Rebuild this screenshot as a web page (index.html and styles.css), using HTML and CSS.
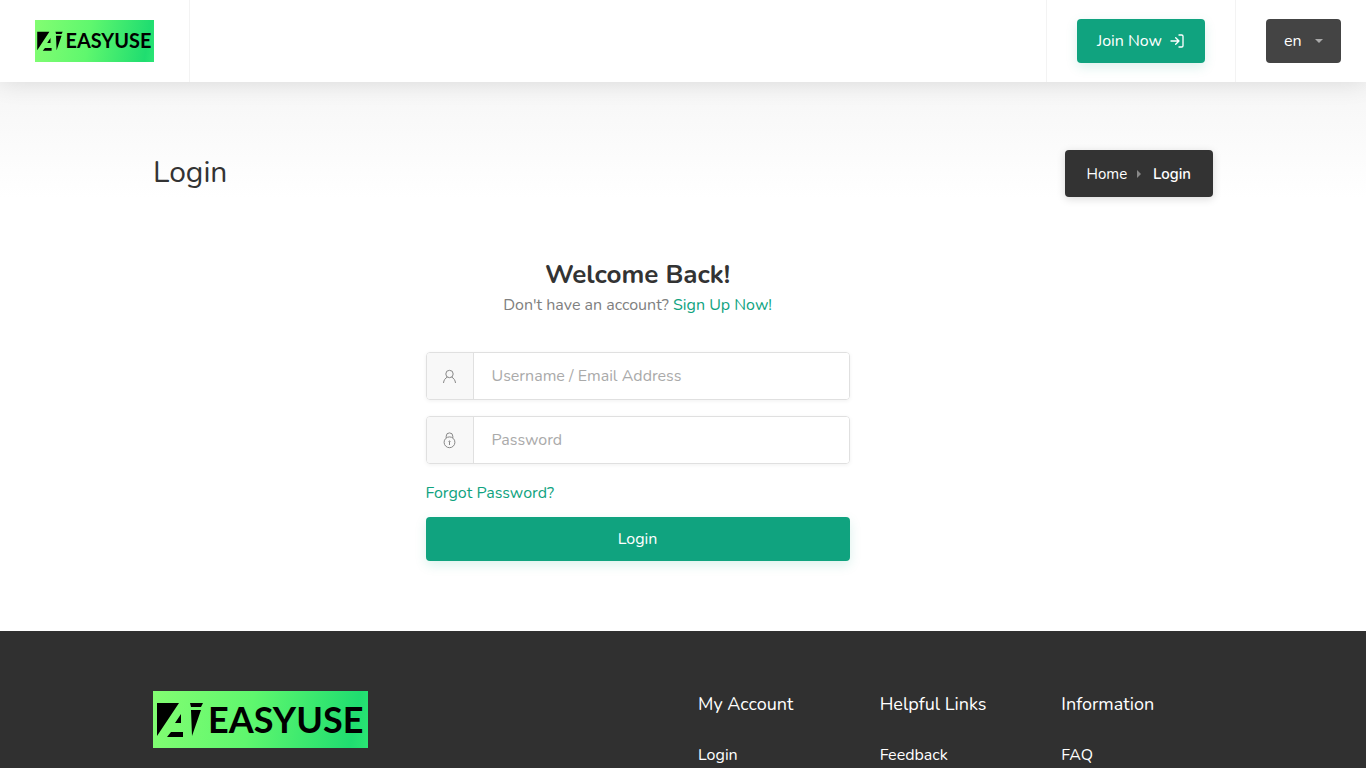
FILE: index.html
```
<!DOCTYPE html>
<html lang="en">
<head>
    <meta charset="utf-8">
    <meta name="viewport" content="width=device-width, initial-scale=1">
    <title>Login</title>
    <link rel="stylesheet" href="styles.css">
</head>
<body>
    <svg class="sprite" aria-hidden="true">
        <symbol id="logo" viewBox="0 0 215 57">
            <path d="M4 12H26L4 45ZM28 23V32H22ZM18 41H30V46H14ZM37 12H50L48 16H38ZM38 19H48L39 45Z"/>
            <text class="logo-text" x="55" y="42">EASYUSE</text>
        </symbol>
    </svg>

    <header class="header">
        <a class="header-logo" href="#"><svg class="logo logo-small" role="img" aria-label="Easyuse" viewBox="0 0 215 57"><use href="#logo"/></svg></a>
        <div class="header-item header-join">
            <a class="button join" href="#">Join Now
                <svg class="icon" viewBox="0 0 24 24"><path d="M15 3h4a2 2 0 0 1 2 2v14a2 2 0 0 1-2 2h-4M10 17l5-5-5-5M15 12H3"/></svg>
            </a>
        </div>
        <div class="header-item header-lang">
            <div class="lang">
                <select aria-label="Language"><option>en</option></select>
            </div>
        </div>
    </header>

    <div class="titlebar">
        <div class="container titlebar-inner">
            <h1>Login</h1>
            <nav class="breadcrumbs">
                <a href="#">Home</a>
                <span class="arrow"></span>
                <b>Login</b>
            </nav>
        </div>
    </div>

    <main class="container grid">
        <form class="login">
            <h2>Welcome Back!</h2>
            <p class="signup">Don't have an account? <a href="#">Sign Up Now!</a></p>
            <div class="field">
                <label for="username"><svg class="field-icon" viewBox="0 0 16 16"><circle cx="7.500" cy="6" r="3.700"/><path d="M5.400 9C3.200 10.300 1.800 12 1.500 15M9.600 9c2.200 1.300 3.600 3 3.900 6"/></svg></label>
                <input id="username" type="text" placeholder="Username / Email Address">
            </div>
            <div class="field">
                <label for="password"><svg class="field-icon" viewBox="0 0 16 16"><circle cx="7.500" cy="10.300" r="5.400"/><path d="M4.200 6V4.200a3.300 3.300 0 0 1 6.600 0V6M7.500 10v3"/><circle cx="7.500" cy="9.500" r="0.600"/></svg></label>
                <input id="password" type="password" placeholder="Password">
            </div>
            <a class="forgot" href="#">Forgot Password?</a>
            <button class="button submit" type="submit">Login</button>
        </form>
    </main>

    <footer class="footer">
        <div class="container grid">
            <div class="footer-logo"><svg class="logo logo-large" role="img" aria-label="Easyuse" viewBox="0 0 215 57"><use href="#logo"/></svg></div>
            <div class="links">
                <h3>My Account</h3>
                <a href="#">Login</a>
            </div>
            <div class="links">
                <h3>Helpful Links</h3>
                <a href="#">Feedback</a>
            </div>
            <div class="links">
                <h3>Information</h3>
                <a href="#">FAQ</a>
            </div>
        </div>
    </footer>
</body>
</html>
```
FILE: styles.css
```
* {
    box-sizing: border-box;
}

body {
    display: flex;
    flex-direction: column;
    min-height: 100vh;
    margin: 0;
    background: #fff;
    color: #808080;
    font: 16px/24px Nunito, Lato, sans-serif;
}

a {
    color: #10a37f;
    text-decoration: none;
}

h1, h2, h3, p {
    margin: 0;
    font-weight: 400;
}

.sprite {
    position: absolute;
    width: 0;
    height: 0;
}

.logo {
    display: block;
    background: linear-gradient(100deg, #83fd72, #5ff76e 45%, #20dd70 92%, #2be574);
}

.logo-small {
    width: 119px;
    height: 42px;
}

.logo-large {
    width: 215px;
    height: 57px;
}

.logo-text {
    font: 700 36px Lato, sans-serif;
}

.container {
    width: 100%;
    max-width: 1090px;
    margin: 0 auto;
    padding: 0 15px;
}

.grid {
    display: grid;
    grid-template-columns: repeat(12, minmax(0, 1fr));
    column-gap: 30px;
}

/* header */
.header {
    position: relative;
    display: flex;
    height: 82px;
    background: #fff;
    box-shadow: 0 0 24px rgba(0, 0, 0, 0.12);
}

.header-logo {
    display: flex;
    align-items: center;
    padding: 0 35px;
    border-right: 1px solid #f3f3f3;
}

.header-item {
    display: flex;
    align-items: center;
    border-left: 1px solid #f3f3f3;
}

.header-join {
    margin-left: auto;
    padding: 0 30px;
}

.header-lang {
    padding: 0 25px 0 30px;
}

.button {
    display: flex;
    align-items: center;
    justify-content: center;
    height: 44px;
    border: 0;
    border-radius: 4px;
    background: #10a37f;
    box-shadow: 0 4px 12px rgba(16, 163, 127, 0.15);
    color: #fff;
    font: inherit;
}

.join {
    gap: 7px;
    width: 128px;
}

.icon {
    width: 16px;
    height: 16px;
    fill: none;
    stroke: #fff;
    stroke-width: 2;
    stroke-linecap: round;
    stroke-linejoin: round;
}

.lang {
    position: relative;
}

.lang select {
    display: block;
    width: 75px;
    height: 44px;
    padding: 0 18px;
    appearance: none;
    border: 0;
    border-radius: 4px;
    background: #444;
    color: #fff;
    font: inherit;
}

.lang::after {
    content: "";
    position: absolute;
    top: 20px;
    right: 18px;
    border: 4px solid transparent;
    border-top-color: #aaa;
    border-bottom: 0;
    pointer-events: none;
}

/* title */
.titlebar {
    padding: 68px 0 60px;
    background: linear-gradient(#f6f6f6, #fff 115px);
}

.titlebar-inner {
    display: flex;
    align-items: flex-start;
    justify-content: space-between;
}

h1 {
    color: #333;
    font-size: 30px;
    line-height: 46px;
}

.breadcrumbs {
    display: flex;
    align-items: center;
    height: 47px;
    padding: 0 22px;
    border-radius: 4px;
    background: #333;
    box-shadow: 0 2px 8px rgba(0, 0, 0, 0.15);
    color: #fff;
    font-size: 15px;
}

.breadcrumbs a {
    color: #fff;
}

.breadcrumbs b {
    font-weight: 600;
}

.arrow {
    margin: 0 12px 0 10px;
    border: 4px solid transparent;
    border-left-color: #888;
    border-right: 0;
}

/* login form */
.login {
    display: flex;
    flex-direction: column;
    grid-column: 4 / span 5;
    margin-bottom: 70px;
}

.login h2 {
    color: #333;
    font-size: 26px;
    font-weight: 700;
    line-height: 36px;
    text-align: center;
}

.signup {
    margin-bottom: 35px;
    text-align: center;
}

.field {
    display: flex;
    height: 48px;
    margin-bottom: 16px;
    overflow: hidden;
    border: 1px solid #e0e0e0;
    border-radius: 4px;
    box-shadow: 0 1px 4px rgba(0, 0, 0, 0.06);
}

.field label {
    display: flex;
    align-items: center;
    justify-content: center;
    width: 47px;
    border-right: 1px solid #e0e0e0;
    background: #f8f8f8;
}

.field-icon {
    width: 16px;
    height: 16px;
    fill: none;
    stroke: #888;
    stroke-width: 1;
    overflow: visible;
}

.field input {
    flex: 1;
    min-width: 0;
    padding: 0 18px;
    border: 0;
    color: #808080;
    font: inherit;
}

.field input::placeholder {
    color: #aaa;
}

.forgot {
    align-self: flex-start;
    margin: 1px 0 12px;
}

/* footer */
.footer {
    flex: 1;
    padding-top: 60px;
    background: #303030;
}

.footer-logo {
    grid-column: span 6;
}

.links {
    grid-column: span 2;
}

.links h3 {
    margin-bottom: 26px;
    color: #fff;
    font-size: 18px;
    line-height: 26px;
}

.links a {
    display: block;
    color: #fff;
}
```
